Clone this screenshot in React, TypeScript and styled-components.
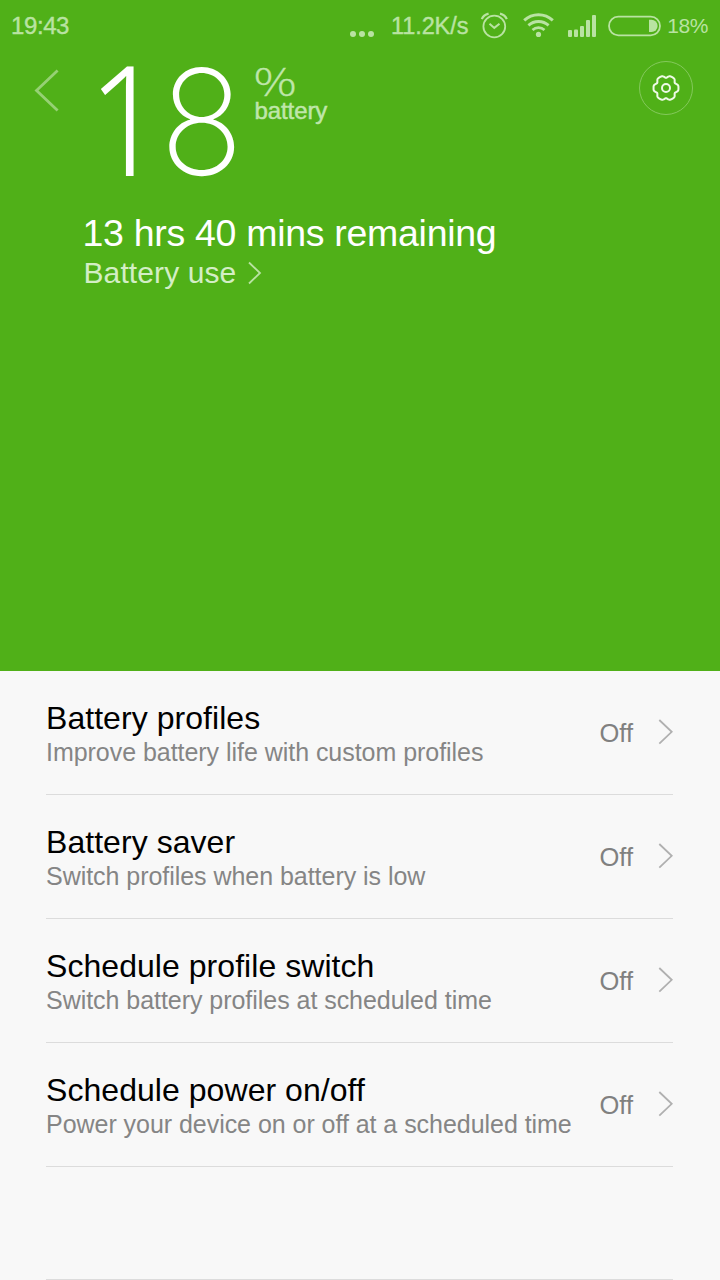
import React from 'react';
import styled, { createGlobalStyle } from 'styled-components';

const GlobalStyle = createGlobalStyle`
  body {
    margin: 0;
    background: #f8f8f8;
    font-family: "Liberation Sans", Arial, sans-serif;
  }
`;

const soft = '#b9e3a2';

const Screen = styled.main`
  width: 720px;
  height: 1280px;
  overflow: hidden;
  display: flex;
  flex-direction: column;
  background: #f8f8f8;
`;

const Hero = styled.header`
  height: 671px;
  flex: none;
  background: #50b018;
  color: #fff;
`;

const StatusBar = styled.div`
  height: 51px;
  box-sizing: border-box;
  padding: 0 12.2px 0 11px;
  display: flex;
  align-items: center;
  color: ${soft};
`;

const StatusText = styled.span<{ $size: number; $bold?: number; $spacing?: number }>`
  font-size: ${p => p.$size}px;
  line-height: 30px;
  letter-spacing: ${p => p.$spacing ?? 0}px;
  -webkit-text-stroke: ${p => p.$bold ?? 0}px currentColor;
  white-space: nowrap;
`;

const StatusIcons = styled.svg`
  display: block;
  flex: none;
`;

const Spacer = styled.div<{ $w?: number }>`
  ${p => (p.$w ? `width: ${p.$w}px; flex: none;` : 'flex: 1;')}
`;

const Summary = styled.div`
  display: flex;
  align-items: flex-start;
  height: 160px;
`;

const BackButton = styled.button`
  margin: 17px 0 0 33px;
  padding: 0;
  border: 0;
  background: none;
  width: 28px;
  height: 44px;
  svg { display: block; }
`;

const Level = styled.div`
  display: flex;
  margin-left: 27px;
  height: 150px;
`;

const Digit = styled.span<{ $w: number; $family: string; $weight: number; $size: number; $stretch: number; $top: number }>`
  width: ${p => p.$w}px;
  margin-top: ${p => p.$top}px;
  font-family: "${p => p.$family}", sans-serif;
  font-weight: ${p => p.$weight};
  font-size: ${p => p.$size}px;
  line-height: 150px;
  transform: scaleX(${p => p.$stretch});
  transform-origin: left center;
`;

const Unit = styled.div`
  display: flex;
  flex-direction: column;
  color: #bfe6aa;
`;

const Percent = styled.span`
  margin-top: 12px;
  height: 34px;
  font: 300 38px/34px "Noto Sans CJK SC", sans-serif;
  -webkit-text-stroke: 0.3px currentColor;
  transform: scaleX(1.24);
  transform-origin: left center;
`;

const UnitLabel = styled.span`
  padding-left: 1px;
  font-size: 24px;
  line-height: 28px;
  letter-spacing: -0.1px;
  -webkit-text-stroke: 0.5px currentColor;
`;

const SettingsButton = styled.button`
  box-sizing: border-box;
  width: 54px;
  height: 54px;
  margin: 10px 27px 0 auto;
  padding: 0;
  border: 1px solid #84c95c;
  border-radius: 50%;
  background: none;
  display: grid;
  place-items: center;
`;

const Remaining = styled.div`
  padding-left: 82.5px;
  font-size: 37.5px;
  line-height: 44px;
  letter-spacing: -0.3px;
`;

const UseLink = styled.div`
  display: flex;
  align-items: center;
  padding-left: 83.5px;
  font-size: 30px;
  line-height: 36px;
  letter-spacing: 0.1px;
  color: #d3eec5;
  svg { margin-left: 11px; }
`;

const List = styled.section`
  padding: 0 47px 0 46px;
`;

const Row = styled.div<{ $h?: number }>`
  box-sizing: border-box;
  height: ${p => p.$h ?? 124}px;
  border-bottom: 1px solid #dcdcdc;
  display: flex;
  align-items: center;
`;

const RowText = styled.div`
  flex: 1;
  height: 66px;
`;

const Title = styled.div`
  font-size: 32px;
  line-height: 36px;
  letter-spacing: 0.05px;
  color: #000;
  white-space: nowrap;
`;

const Subtitle = styled.div`
  font-size: 25px;
  line-height: 32px;
  letter-spacing: -0.04px;
  color: #858585;
  white-space: nowrap;
`;

const Value = styled.span`
  font-size: 25.5px;
  line-height: 30px;
  color: #808080;
  margin-right: 24px;
`;

const Chevron = styled.svg`
  display: block;
  margin: -1px -1px 0 1px;
`;

const gearPath =
  Array.from({ length: 96 }, (_, i) => {
    const a = (i / 96) * Math.PI * 2;
    const r = 11.7 + 1.15 * Math.cos(6 * a) - 0.4 * Math.cos(12 * a);
    return `${i ? 'L' : 'M'}${(16 + r * Math.cos(a)).toFixed(2)} ${(16 + r * Math.sin(a)).toFixed(2)}`;
  }).join('') + 'Z';

const rows = [
  { title: 'Battery profiles', sub: 'Improve battery life with custom profiles' },
  { title: 'Battery saver', sub: 'Switch profiles when battery is low' },
  { title: 'Schedule profile switch', sub: 'Switch battery profiles at scheduled time' },
  { title: 'Schedule power on/off', sub: 'Power your device on or off at a scheduled time' },
];

export default function App() {
  return (
    <>
      <GlobalStyle />
      <Screen>
        <Hero>
          <StatusBar>
            <StatusText $size={24} $bold={0.4} $spacing={-0.4}>19:43</StatusText>
            <Spacer />
            <StatusIcons width="26" height="50" viewBox="349 0 26 50" fill={soft}>
              <circle cx="353" cy="33" r="3" />
              <circle cx="362" cy="33" r="3" />
              <circle cx="371" cy="33" r="3" />
            </StatusIcons>
            <Spacer $w={16} />
            <StatusText $size={23.5} $bold={0.4} $spacing={-0.1}>11.2K/s</StatusText>
            <Spacer $w={12} />
            <StatusIcons width="182" height="50" viewBox="480 0 182 50" fill="none" stroke={soft}>
              <circle cx="494.3" cy="25.5" r="10.9" strokeWidth="1.8" />
              <path d="M489.5 22.7l4.8 4.2 5.2-4.2" strokeWidth="2" />
              <path d="M481.8 18.2q1.6-4.2 6.8-5.6M506.8 18.2q-1.6-4.2-6.8-5.6" strokeWidth="2.2" />
              <path d="M524.2 19.4a21 21 0 0 1 28.6 0" strokeWidth="3" />
              <path d="M528.4 24.4a15 15 0 0 1 20.2 0" strokeWidth="2.8" />
              <path d="M532.5 29a9 9 0 0 1 12 0" strokeWidth="2.8" />
              <g fill={soft} stroke="none">
                <circle cx="538.5" cy="33.4" r="2.6" />
                <rect x="568" y="29" width="4" height="7" rx="1" />
                <rect x="574" y="28.5" width="4" height="7.5" rx="1" />
                <rect x="580" y="25" width="4" height="11" rx="1" />
                <rect x="586" y="19" width="4" height="17" rx="1" />
                <rect x="592" y="14" width="4" height="22" rx="1" />
                <path d="M649 18.8h2.5a6 6 0 0 1 0 12.2H649z" />
              </g>
              <rect x="609" y="15.7" width="51" height="18.6" rx="9.3" strokeWidth="1.8" />
            </StatusIcons>
            <Spacer $w={5} />
            <StatusText $size={21} $spacing={-0.5}>18%</StatusText>
          </StatusBar>
          <Summary>
            <BackButton aria-label="Back">
              <svg width="28" height="44" fill="none" stroke="#96d174" strokeWidth="2.8">
                <path d="M24.6 2.5L3.5 22.5l21.1 20" />
              </svg>
            </BackButton>
            <Level>
              <Digit $w={72} $family="Noto Sans" $weight={280} $size={153} $stretch={0.88} $top={-9}>1</Digit>
              <Digit $w={93.5} $family="Inter" $weight={215} $size={147} $stretch={0.94} $top={-4}>8</Digit>
            </Level>
            <Unit>
              <Percent>%</Percent>
              <UnitLabel>battery</UnitLabel>
            </Unit>
            <SettingsButton aria-label="Settings">
              <svg width="32" height="32" fill="none" stroke="#eefae6" strokeWidth="2">
                <path d={gearPath} strokeLinejoin="round" />
                <circle cx="16" cy="16" r="4" />
              </svg>
            </SettingsButton>
          </Summary>
          <Remaining>13 hrs 40 mins remaining</Remaining>
          <UseLink>
            Battery use
            <svg width="16" height="24" fill="none" stroke="#b9e3a2" strokeWidth="1.8">
              <path d="M2 1.5l11 10.5L2 22.5" />
            </svg>
          </UseLink>
        </Hero>
        <List>
          {rows.map(r => (
            <Row key={r.title}>
              <RowText>
                <Title>{r.title}</Title>
                <Subtitle>{r.sub}</Subtitle>
              </RowText>
              <Value>Off</Value>
              <Chevron width="16" height="26" fill="none" stroke="#b0b0b0" strokeWidth="1.8">
                <path d="M1.3 1l12.4 11.8L1.3 24.6" />
              </Chevron>
            </Row>
          ))}
          <Row $h={113} />
        </List>
      </Screen>
    </>
  );
}
